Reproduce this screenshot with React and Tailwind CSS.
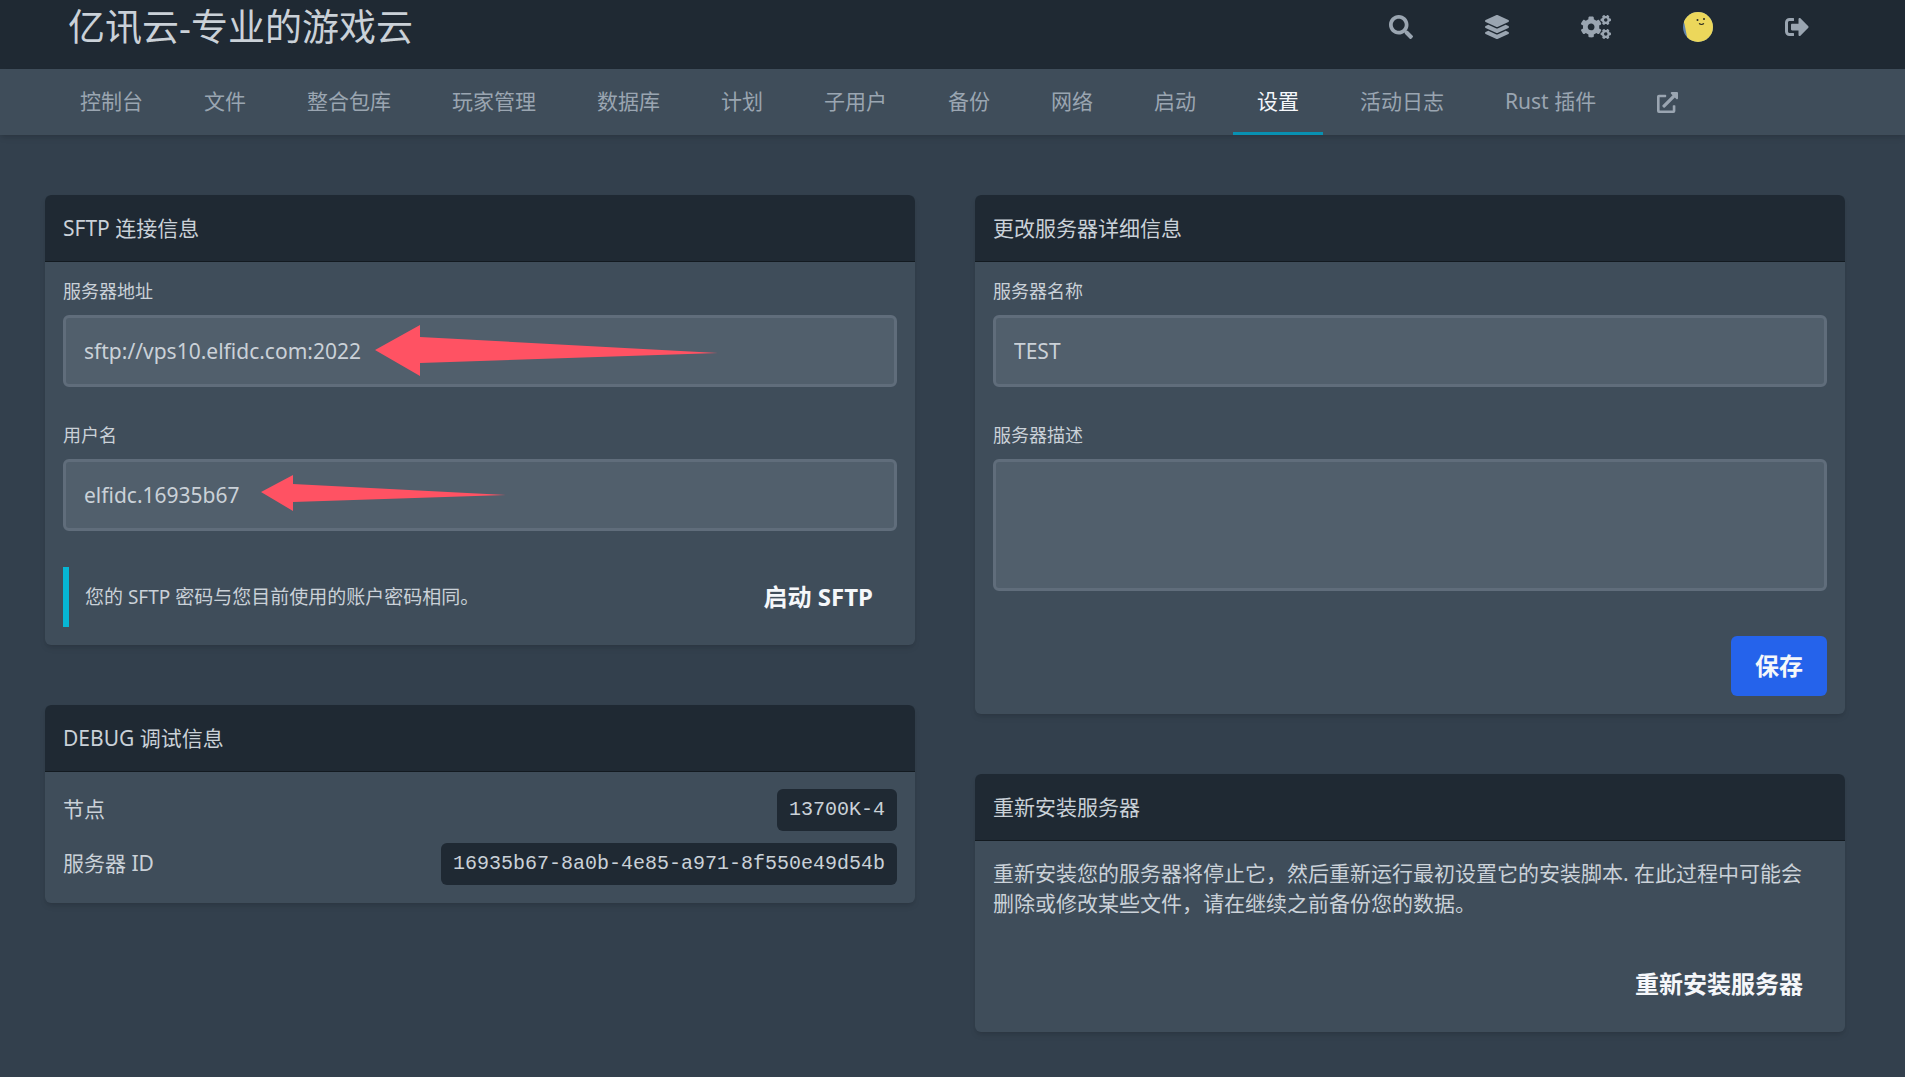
import { FaSearch, FaLayerGroup, FaCogs, FaSignOutAlt, FaExternalLinkAlt } from "react-icons/fa";

const navItems = [
  "控制台",
  "文件",
  "整合包库",
  "玩家管理",
  "数据库",
  "计划",
  "子用户",
  "备份",
  "网络",
  "启动",
  "设置",
  "活动日志",
  "Rust 插件",
];

function Avatar() {
  return (
    <svg viewBox="0 0 30 30" className="size-[30px]" aria-hidden="true">
      <defs>
        <clipPath id="avatar-clip">
          <circle cx="15" cy="15" r="15" />
        </clipPath>
      </defs>
      <g clipPath="url(#avatar-clip)">
        <rect width="30" height="30" fill="#5f83ad" />
        <path d="M0 8 L1.5 12 L5 30 L30 30 L30 0 L0 0 Z" fill="#ecd75b" />
        <circle cx="14.5" cy="8" r="1" fill="#2a2a20" />
        <circle cx="21" cy="7" r="1" fill="#2a2a20" />
        <path d="M16 11.5 Q18.5 13.4 21 11.5" fill="none" stroke="#2a2a20" strokeWidth="1.1" />
      </g>
    </svg>
  );
}

function Header() {
  const item = "flex h-[45px] items-center px-[36px] text-[24px] text-[#9aa5b1]";
  return (
    <header className="flex h-[69px] items-start justify-between bg-[#1f2933] pr-[60px] pl-[68px]">
      <a href="#" className="text-[37px] leading-[54px] text-[#cad1d8]">
        亿讯云-专业的游戏云
      </a>
      <div className="flex pt-[4px]">
        <button type="button" aria-label="搜索" className={item}>
          <FaSearch />
        </button>
        <a href="#" aria-label="服务器" className={item}>
          <FaLayerGroup />
        </a>
        <a href="#" aria-label="管理" className={item}>
          <FaCogs className="h-[24px] w-[30px]" />
        </a>
        <a href="#" aria-label="账户" className={item}>
          <Avatar />
        </a>
        <button type="button" aria-label="退出" className={item}>
          <FaSignOutAlt />
        </button>
      </div>
    </header>
  );
}

function SubNav() {
  return (
    <nav className="flex h-[66px] gap-[13px] bg-[#3f4d5a] pl-[56px] text-[21px] text-[#9aa5b1] shadow-md">
      {navItems.map((name) =>
        name === "设置" ? (
          <a
            key={name}
            href="#"
            aria-current="page"
            className="flex items-center border-b-3 border-[#0891b2] px-[24px] pt-[3px] whitespace-nowrap text-[#f5f7fa]"
          >
            {name}
          </a>
        ) : (
          <a key={name} href="#" className="flex items-center px-[24px] whitespace-nowrap">
            {name}
          </a>
        )
      )}
      <a href="#" aria-label="在新窗口打开" className="flex items-center px-[24px]">
        <FaExternalLinkAlt />
      </a>
    </nav>
  );
}

function Card({ title, children }) {
  return (
    <section className="rounded-md bg-[#3f4d5a] shadow-md">
      <h2 className="rounded-t-md border-b border-[#131a20] bg-[#1f2933] px-[18px] py-[18px] text-[21px] leading-[30px]">
        {title}
      </h2>
      <div className="px-[18px] pt-[17px] pb-[18px]">{children}</div>
    </section>
  );
}

const fieldClass =
  "block w-full rounded-md border-3 border-[#606d7b] bg-[#515f6c] px-[18px] text-[21px] text-[#cad1d8] outline-none";

function Field({ id, label, value, children }) {
  return (
    <div className="relative">
      <label htmlFor={id} className="mb-[12px] block text-[18px] leading-[24px]">
        {label}
      </label>
      <input id={id} type="text" defaultValue={value} className={fieldClass + " h-[72px]"} />
      {children}
    </div>
  );
}

function DebugRow({ label, value }) {
  return (
    <div className="flex h-[42px] items-center justify-between">
      <span className="text-[21px]">{label}</span>
      <code className="rounded-md bg-[#1f2933] px-[12px] font-['Liberation_Mono',monospace] text-[20px] leading-[42px]">
        {value}
      </code>
    </div>
  );
}

const buttonClass = "h-[60px] rounded-md px-[24px] text-[24px] font-bold text-[#f5f7fa]";

export default function App() {
  return (
    <div className="min-h-screen bg-[#33404d] font-['Noto_Sans','Noto_Sans_CJK_SC',sans-serif] text-[#cad1d8]">
      <Header />
      <SubNav />
      <main className="grid grid-cols-2 items-start gap-[60px] pt-[60px] pr-[60px] pl-[45px]">
        <div className="flex flex-col gap-[60px]">
          <Card title="SFTP 连接信息">
            <div className="flex flex-col gap-[36px]">
              <Field id="sftp-address" label="服务器地址" value="sftp://vps10.elfidc.com:2022">
                <svg
                  viewBox="0 0 344 52"
                  className="pointer-events-none absolute top-[45px] left-[312px] h-[52px] w-[344px]"
                  aria-hidden="true"
                >
                  <path d="M0 26 L45 1 L45 13 L343 29 L45 39 L45 52 Z" fill="#ff5263" />
                </svg>
              </Field>
              <Field id="sftp-user" label="用户名" value="elfidc.16935b67">
                <svg
                  viewBox="0 0 246 36"
                  className="pointer-events-none absolute top-[52px] left-[198px] h-[36px] w-[246px]"
                  aria-hidden="true"
                >
                  <path d="M0 17 L32 0 L32 9 L245 20 L32 27 L32 36 Z" fill="#ff5263" />
                </svg>
              </Field>
              <div className="flex items-stretch justify-between">
                <p className="flex items-center border-l-6 border-[#06b6d4] pl-[16px] text-[19px]">
                  您的 SFTP 密码与您目前使用的账户密码相同。
                </p>
                <button type="button" className={buttonClass}>
                  启动 SFTP
                </button>
              </div>
            </div>
          </Card>
          <Card title="DEBUG 调试信息">
            <div className="flex flex-col gap-[12px]">
              <DebugRow label="节点" value="13700K-4" />
              <DebugRow label="服务器 ID" value="16935b67-8a0b-4e85-a971-8f550e49d54b" />
            </div>
          </Card>
        </div>
        <div className="flex flex-col gap-[60px]">
          <Card title="更改服务器详细信息">
            <Field id="server-name" label="服务器名称" value="TEST" />
            <label htmlFor="server-desc" className="mt-[36px] mb-[12px] block text-[18px] leading-[24px]">
              服务器描述
            </label>
            <textarea id="server-desc" className={fieldClass + " h-[132px] resize-none py-[12px]"} />
            <div className="mt-[45px] flex justify-end">
              <button type="button" className={buttonClass + " bg-[#2563eb]"}>
                保存
              </button>
            </div>
          </Card>
          <Card title="重新安装服务器">
            <p className="pr-[12px] text-[21px] leading-[30px]">
              重新安装您的服务器将停止它，然后重新运行最初设置它的安装脚本. 在此过程中可能会删除或修改某些文件，请在继续之前备份您的数据。
            </p>
            <div className="mt-[36px] flex justify-end">
              <button type="button" className={buttonClass}>
                重新安装服务器
              </button>
            </div>
          </Card>
        </div>
      </main>
    </div>
  );
}
